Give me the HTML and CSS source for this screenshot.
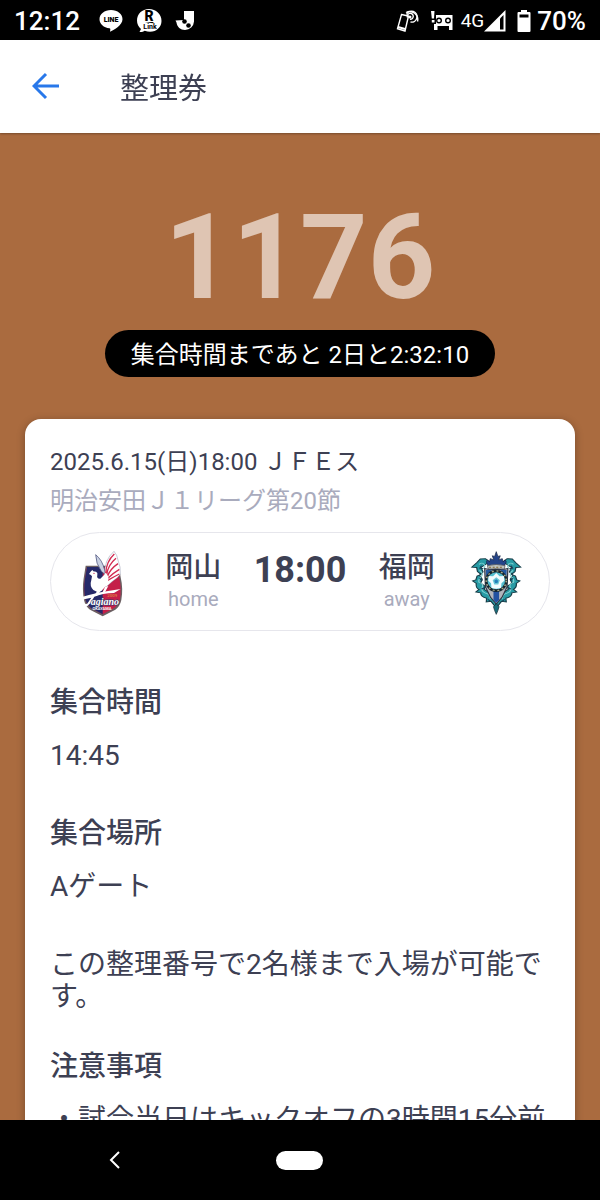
FILE: index.html
```html
<!DOCTYPE html>
<html lang="ja">
<head>
    <meta charset="UTF-8">
    <meta name="viewport" content="width=device-width, initial-scale=1.0">
    <title>整理券</title>
    <link rel="stylesheet" href="styles.css">
</head>
<body>

<div class="status-bar">
    <span class="clock">12:12</span>
    <svg class="notice-icon" width="24" height="24" viewBox="0 0 24 24">
        <path d="M12 1C5.500 1 .5 5 .5 10.200c0 4.700 4.200 8.400 10 9.100.8.200.9.700.8 1.400l-.3 2c3.500-1.400 12.500-6.300 12.500-12.500C23.500 5 18.500 1 12 1z" fill="#fff"/>
        <text x="12" y="13" text-anchor="middle" class="line-text">LINE</text>
    </svg>
    <svg class="notice-icon" width="26" height="24" viewBox="0 0 26 24">
        <path d="M13 0C6 0 1 5 1 11.500c0 3.500 1.500 6.500 4 8.600L3.500 23c2 .2 4-.3 5.200-1.200C18 25 25.500 19.500 25.500 12 25.500 5 20 0 13 0z" fill="#fff"/>
        <text x="13" y="12" text-anchor="middle" class="rakuten-text">R</text>
        <path d="M9 13h9l-1.500 1.300z" fill="#000"/>
        <text x="14" y="20" text-anchor="middle" class="link-text">Link</text>
    </svg>
    <svg class="notice-icon" width="20" height="24" viewBox="0 0 20 24">
        <path d="M9 2h10v10.500a9 9 0 0 1-9 8.500c-4.500 0-8-3-8.500-7.500L.5 11.500 9 11z" fill="#fff"/>
        <circle cx="9.500" cy="12.500" r="2.300"/>
        <circle cx="13.500" cy="16.500" r="2.300"/>
    </svg>
    <div class="status-right">
        <svg width="24" height="24" viewBox="0 0 24 24" fill="none" stroke="#fff" stroke-width="1.400">
            <path d="M6.500 5.500l7 1.500-3.500 15-7.500-2.300z"/>
            <path d="M3 18l7 2" stroke-width="2"/>
            <path d="M12.500 8.500a3 3 0 1 1 2.500 1.800"/>
            <path d="M11.500 5.500a5.500 5.500 0 1 1 4 7.500"/>
            <path d="M11 3.500a8 8 0 0 1 11.500 9"/>
            <circle cx="15" cy="8" r=".8"/>
        </svg>
        <svg class="drive-icon" width="22" height="22" viewBox="0 0 22 22">
            <path d="M0 1h3.500L3 8.500H.8zM.8 10h2.700v2.500H.8z" fill="#fff"/>
            <path d="M5 5h16.500v15H18v-4H6.500v4H3v-6h2z" fill="#fff"/>
            <circle cx="8" cy="10.500" r="2.300" fill="#fff" stroke="#000" stroke-width="1.400"/>
            <circle cx="17" cy="10.500" r="2.300" fill="#fff" stroke="#000" stroke-width="1.400"/>
        </svg>
        <span class="network">4G</span>
        <svg width="22" height="22" viewBox="0 0 22 22">
            <path d="M21.500 0v21.500H0z" fill="#fff"/>
            <path d="M16 8.500l3.500-3.500v14.500H16z"/>
        </svg>
        <svg class="battery-icon" width="14" height="24" viewBox="0 0 14 24">
            <path d="M4 1h6v2h2.500q1 0 1 1v18q0 1-1 1h-11q-1 0-1-1V4q0-1 1-1H4z" fill="#fff"/>
            <path d="M2.500 5.500h9v3h-9z"/>
        </svg>
        <span class="battery">70%</span>
    </div>
</div>

<header class="header">
    <button class="back-btn" aria-label="戻る">
        <svg width="28" height="28" viewBox="0 0 28 28" fill="none" stroke="#2878ea" stroke-width="3">
            <path d="M27 14H2M14 2L2 14l12 12"/>
        </svg>
    </button>
    <h1 class="title">整理券</h1>
</header>

<main class="content">
    <div class="number">1176</div>
    <div class="countdown">集合時間まであと 2日と2:32:10</div>

    <div class="card">
        <p class="match-date">2025.6.15(日)18:00 ＪＦＥス</p>
        <p class="match-league">明治安田Ｊ１リーグ第20節</p>

        <div class="match">
            <svg class="emblem" viewBox="0 0 210 240">
                <path d="M47 71l-6 38q-5 34 1 65 4 19 18 29l38 20 38-20q14-10 18-29 6-34-2-68l-6-35z" fill="#6b5f62"/>
                <path d="M51 75l-6 35q-5 32 1 61 4 17 17 27l35 19 35-19q13-10 17-27 5-32-2-64l-5-32z" fill="#c41f49"/>
                <path d="M51 75l-6 35q-5 32 1 61 4 17 17 27l35 19V75z" fill="#252969"/>
                <!-- pheasant -->
                <path d="M94 88q-17-24-17-50 20 16 27 46l2 14z" fill="#c8d0e2" stroke="#39406c" stroke-width="2"/>
                <path d="M104 98q-2-44 28-70l8 12 5 18 5 17 1 22-9 10-16 12-20 18z" fill="#fff" stroke="#596287" stroke-width="1"/>
                <path d="M133 36q-24 22-26 58M138 49q-24 20-28 49M144 65q-24 16-32 39M148 82q-20 12-36 28M148 96q-16 8-36 20" fill="none" stroke="#d22a51" stroke-width="4"/>
                <path d="M57 96l6-8 4-4 3 4 8 1q6 2 4 10-3 12 9 11l17-17 7 11q2 17-8 29l-13 14-12 3-12-6q-12-12-6-30l2-11q-2-5-9-7z" fill="#fff"/>
                <circle cx="72" cy="94" r="2" fill="#c41f49"/>
                <path d="M86 140l-14 22h8l17-21zM105 135l-8 17h7l11-20z" fill="#fff"/>
                <!-- sweeping stroke of the wordmark -->
                <path d="M33 166q50-16 119-25l-20 12q-35 1-59 11l-12 20q-10 12-18 10-6-4 0-9l8 1 13-19-28 6z" fill="#fff"/>
                <text x="112" y="166" class="crest-year">2009</text>
                <text x="62" y="189" class="crest-script">agiano</text>
                <text x="96" y="204" text-anchor="middle" class="crest-town">OKAYAMA</text>
            </svg>

            <div class="team">
                <span class="team-name">岡山</span>
                <span class="team-side">home</span>
            </div>
            <span class="kickoff">18:00</span>
            <div class="team">
                <span class="team-name">福岡</span>
                <span class="team-side">away</span>
            </div>

            <svg class="emblem" viewBox="0 0 210 240">
                <g transform="matrix(1.2 0 0 .95 -10 10)">
                    <!-- scrollwork, one half mirrored onto the other -->
                    <g id="scroll">
                        <path d="M82 52l-10-10-13 1-9 12-12 14 12 1 2 13 9 9-10 5-3 12-8 3 9 8q-2 14 7 19l-8 8 12 3q0 14 15 17l-1 12 12-2 12 19v-20l-8-12-9-15-12-10 2-10-11-10 4-12-7-13 9-10-5-14z" fill="#279ba5" stroke="#173d48" stroke-width="3"/>
                        <path d="M56 60q8-8 13 1t-6 14M57 79q12 10 4 20t-5 18q12 4 8 16t8 18q12 3 12 18" fill="none" stroke="#83d0d1" stroke-width="3"/>
                        <path d="M62 64l-4 8 8 2M57 104l7 8M62 138l8-4M78 171l6 5" fill="none" stroke="#193c55" stroke-width="3"/>
                    </g>
                    <use href="#scroll" transform="matrix(-1 0 0 1 198 0)"/>
                    <!-- crown -->
                    <path d="M99 20l4 15 6-2-4 13 9-4 2 10 5-6 3 6-6 17H80l-6-17 3-6 5 6 2-10 9 4-4-13 6 2z" fill="#24448a" stroke="#192644" stroke-width="2"/>
                    <path d="M77 64q22-7 44 0l-2 12q-20-6-40 0z" fill="#bfc4c2" stroke="#4e5056" stroke-width="2"/>
                    <path d="M81 69h36" stroke="#82652d" stroke-width="3" stroke-dasharray="5 4"/>
                    <!-- shield -->
                    <path d="M70 73q10 5 29 3 19 2 29-3l-2 58-13 34-14 20-14-20-13-34z" fill="#b1b4bc" stroke="#303544" stroke-width="3"/>
                    <path d="M73 78l14-1 2 24-15 6zM125 78l-14-1-2 24 15 6z" fill="#2459a0"/>
                    <path d="M92 143h14v30l-7 8-7-8z" fill="#2351a1"/>
                    <ellipse cx="99" cy="112" rx="28" ry="35" fill="#15252f"/>
                    <ellipse cx="99" cy="112" rx="25" ry="31" fill="none" stroke="#abaa88" stroke-width="4" stroke-dasharray="5 7"/>
                    <ellipse cx="99" cy="112" rx="22" ry="27" fill="#54bed0"/>
                    <path d="M99 87l8 11 11-1 1 15-7 8-1 15-12 2-12-2-1-15-7-8 1-15 11 1z" fill="#f2fcff"/>
                    <path d="M99 101l9 9-4 14H94l-4-14z" fill="#68c7d8"/>
                    <path d="M99 107l5 5-2 7h-6l-2-7z" fill="#2580ba"/>
                    <path d="M99 184l7 10-3 12-4 12-4-12-3-12z" fill="#186e7b" stroke="#172c36" stroke-width="2"/>
                </g>
            </svg>
        </div>

        <section class="info">
            <h2>集合時間</h2>
            <p>14:45</p>
        </section>
        <section class="info">
            <h2>集合場所</h2>
            <p>Aゲート</p>
        </section>
        <p class="note">この整理番号で2名様まで入場が可能です。</p>
        <section class="info">
            <h2>注意事項</h2>
            <p>・試合当日はキックオフの3時間15分前</p>
        </section>
    </div>
</main>

<nav class="nav-bar">
    <button class="nav-btn" aria-label="戻る">
        <svg width="12" height="18" viewBox="0 0 12 18" fill="none" stroke="#fff" stroke-width="2">
            <path d="M10 1L2 9l8 8"/>
        </svg>
    </button>
    <button class="nav-btn" aria-label="ホーム"><span class="home-pill"></span></button>
</nav>

</body>
</html>
```
FILE: styles.css
```css
/* Global Styles */
* {
    box-sizing: border-box;
}

body {
    font-family: Roboto, 'Noto Sans CJK JP', sans-serif;
    margin: 0;
    height: 100vh;
    display: flex;
    flex-direction: column;
    overflow: hidden;
    background-color: #000;
    color: #3d4053;
}

h1, h2, p {
    margin: 0;
}

svg {
    display: block;
    flex-shrink: 0;
}

button {
    padding: 0;
    border: none;
    background: none;
    cursor: pointer;
}

/* Status Bar */
.status-bar {
    height: 40px;
    flex-shrink: 0;
    display: flex;
    align-items: center;
    padding: 1px 14px 0;
    color: white;
    font-size: 26px;
    font-weight: 500;
}

.clock {
    margin-right: 19px;
}

.notice-icon {
    margin-right: 13px;
}

.line-text {
    font-size: 7px;
    font-weight: 900;
}

.rakuten-text {
    font-size: 14px;
    font-weight: 900;
}

.link-text {
    font-size: 7px;
    font-weight: 700;
}

.status-right {
    margin-left: auto;
    display: flex;
    align-items: center;
}

.drive-icon {
    margin: 0 8px 0 12px;
}

.network {
    font-size: 19px;
    font-weight: 400;
}

.battery-icon {
    margin: 0 6px 0 11px;
}

/* Header */
.header {
    height: 93px;
    flex-shrink: 0;
    display: flex;
    align-items: center;
    padding: 0 32px 2px;
    background-color: white;
    z-index: 1;
    box-shadow: 0 1px 2px rgba(0, 0, 0, 0.3);
}

.title {
    margin-left: 60px;
    font-size: 29px;
    font-weight: 400;
}

/* Ticket */
.content {
    flex: 1;
    min-height: 0;
    overflow-y: auto;
    scrollbar-width: none;
    padding: 54px 25px 0;
    background-color: #aa6b3f;
}

.number {
    height: 143px;
    line-height: 142px;
    font-size: 118px;
    font-weight: 700;
    text-align: center;
    color: #dfc5b3;
}

.countdown {
    width: fit-content;
    margin: 0 auto 42px;
    padding: 3px 26px 0;
    line-height: 44px;
    border-radius: 24px;
    background-color: #000;
    color: white;
    font-size: 24px;
}

.card {
    padding: 24px 25px;
    background-color: white;
    border-radius: 16px;
    box-shadow: 0 2px 8px rgba(0, 0, 0, 0.3);
}

.match-date,
.match-league {
    font-size: 24px;
    line-height: 39px;
}

.match-league {
    color: #a9abbd;
}

/* Match */
.match {
    display: flex;
    align-items: center;
    height: 99px;
    margin: 11px 0 56px;
    padding: 0 19px;
    border: 1px solid #e6e6ec;
    border-radius: 50px;
}

.emblem {
    width: 70px;
    height: 80px;
}

.team,
.kickoff {
    flex: 1;
    text-align: center;
}

.team {
    display: flex;
    flex-direction: column;
}

.team-name {
    font-size: 28px;
    font-weight: 500;
    line-height: 34px;
}

.team-side {
    font-size: 20px;
    line-height: 28px;
    color: #a9abbd;
}

.kickoff {
    padding-bottom: 24px;
    font-size: 36px;
    font-weight: 700;
    line-height: 36px;
}

.crest-script {
    font-family: 'Liberation Serif', serif;
    font-size: 30px;
    font-style: italic;
    font-weight: 700;
    fill: white;
    stroke: #30376b;
    stroke-width: 3px;
    paint-order: stroke;
}

.crest-year {
    font-size: 13px;
    fill: #e8a33b;
}

.crest-town {
    font-size: 12px;
    font-weight: 700;
    fill: white;
}

/* Info */
.info,
.note {
    margin-bottom: 46px;
    font-size: 28px;
    line-height: 32px;
}

.info h2 {
    margin-bottom: 21px;
    font-size: 28px;
    font-weight: 500;
}

.note {
    margin-bottom: 38px;
}

/* Navigation Bar */
.nav-bar {
    height: 80px;
    flex-shrink: 0;
    display: grid;
    grid-template-columns: repeat(3, 1fr);
    padding: 0 22px;
}

.nav-btn {
    display: flex;
    align-items: center;
    justify-content: center;
}

.home-pill {
    width: 47px;
    height: 19px;
    border-radius: 10px;
    background-color: white;
}
```
